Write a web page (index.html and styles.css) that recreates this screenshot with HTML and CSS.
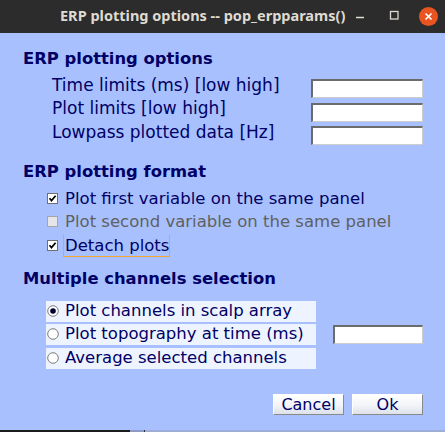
FILE: index.html
```html
<!DOCTYPE html>
<html>
<head>
<meta charset="utf-8">
<title>ERP plotting options</title>
<link rel="stylesheet" href="styles.css">
</head>
<body>
<div class="titlebar">
  <span class="title">ERP plotting options -- pop_erpparams()</span>
  <svg class="controls" width="100" height="33" viewBox="0 0 100 33">
    <line x1="11" y1="17.5" x2="19" y2="17.5" stroke="#dfdbd2" stroke-width="1.5"/>
    <rect x="45.5" y="11.5" width="7.5" height="7.5" fill="none" stroke="#dfdbd2" stroke-width="1.3"/>
    <circle cx="83.5" cy="16.5" r="9.5" fill="#e95420"/>
    <line x1="80.5" y1="13.5" x2="86.5" y2="19.5" stroke="#fff" stroke-width="1.6"/>
    <line x1="86.5" y1="13.5" x2="80.5" y2="19.5" stroke="#fff" stroke-width="1.6"/>
  </svg>
</div>
<div class="content">
  <h2 class="section s1">ERP plotting options</h2>
  <div class="fields">
    <label class="flabel">Time limits (ms) [low high]</label><input class="field" type="text">
    <label class="flabel">Plot limits [low high]</label><input class="field" type="text">
    <label class="flabel">Lowpass plotted data [Hz]</label><input class="field" type="text">
  </div>
  <h2 class="section s2">ERP plotting format</h2>
  <div class="checks">
    <div class="check">
      <span class="box"><svg width="9" height="9" viewBox="0 0 9 9"><polyline points="1.5,4.3 3.5,6.6 7.6,1.8" fill="none" stroke="#000" stroke-width="1.7"/></svg></span>
      <span class="ctext">Plot first variable on the same panel</span>
    </div>
    <div class="check disabled">
      <span class="box"></span>
      <span class="ctext">Plot second variable on the same panel</span>
    </div>
    <div class="check">
      <span class="box"><svg width="9" height="9" viewBox="0 0 9 9"><polyline points="1.5,4.3 3.5,6.6 7.6,1.8" fill="none" stroke="#000" stroke-width="1.7"/></svg></span>
      <span class="ctext focus">Detach plots</span>
    </div>
  </div>
  <h2 class="section s3">Multiple channels selection</h2>
  <div class="radios">
    <div class="radio">
      <svg width="12" height="12" viewBox="0 0 12 12"><circle cx="6" cy="6" r="5.3" fill="#fff" stroke="#7d7d7d" stroke-width="1"/><circle cx="6" cy="6" r="2.8" fill="#000033"/></svg>
      <span class="rtext">Plot channels in scalp array</span>
    </div>
    <div></div>
    <div class="radio">
      <svg width="12" height="12" viewBox="0 0 12 12"><circle cx="6" cy="6" r="5.3" fill="#fff" stroke="#7d7d7d" stroke-width="1"/></svg>
      <span class="rtext">Plot topography at time (ms)</span>
    </div>
    <input class="field small" type="text">
    <div class="radio">
      <svg width="12" height="12" viewBox="0 0 12 12"><circle cx="6" cy="6" r="5.3" fill="#fff" stroke="#7d7d7d" stroke-width="1"/></svg>
      <span class="rtext">Average selected channels</span>
    </div>
    <div></div>
  </div>
  <div class="buttons">
    <button class="btn" type="button">Cancel</button>
    <button class="btn" type="button">Ok</button>
  </div>
</div>
<div class="taskstrip"><span class="seg-dark"></span><span class="seg-mid"></span><span class="seg-rest"></span></div>
</body>
</html>
```
FILE: styles.css
```css
html, body {
  margin: 0;
  padding: 0;
}
body {
  width: 445px;
  height: 432px;
  overflow: hidden;
  background: #a8c1fe;
  color: #000066;
  font-family: "DejaVu Sans", "Liberation Sans", sans-serif;
}
.titlebar {
  height: 33px;
  background: #2c2c2c;
  display: flex;
}
.title {
  flex: 1;
  padding-left: 60px;
  font-family: "Noto Sans", "DejaVu Sans", sans-serif;
  font-weight: 700;
  font-size: 14.5px;
  line-height: 31px;
  color: #dfdbd2;
  white-space: nowrap;
}
.controls {
  flex: none;
  display: block;
}
.content {
  padding-left: 23px;
}
.section {
  margin: 16px 0 0;
  font-size: 16.4px;
  font-weight: 700;
  line-height: 20px;
}
.s2 { margin-top: 18px; }
.s3 { margin-top: 12px; }
.fields {
  display: grid;
  grid-template-columns: 259px 112px;
  grid-auto-rows: 23.5px;
  margin: 4.5px 0 0 29px;
  font-size: 17px;
  line-height: 23.5px;
}
.flabel {
  white-space: nowrap;
}
.field {
  box-sizing: border-box;
  height: 19px;
  margin: 5.5px 0 0;
  padding: 0;
  background: #fff;
  border: 1px solid;
  border-color: #6b6b6b #cdcdcd #cdcdcd #6b6b6b;
  border-width: 2px 1px 1px 2px;
  outline: none;
  width: 112px;
}
.checks {
  margin: 5px 0 0 24px;
  font-size: 16.5px;
}
.check {
  display: flex;
  align-items: center;
  height: 23.3px;
}
.box {
  flex: none;
  box-sizing: border-box;
  width: 11px;
  height: 11px;
  border: 1px solid #6f6f6f;
  background: #fff;
  display: flex;
  align-items: center;
  justify-content: center;
}
.box svg { display: block; }
.ctext {
  margin-left: 5px;
  padding-left: 1px;
  line-height: 21.3px;
  border: 1px solid transparent;
  white-space: nowrap;
}
.disabled { color: #606060; }
.disabled .box {
  background: #e6e6ea;
  border-color: #a6a6a6;
}
.focus {
  border-color: transparent #f2a531 #f2a531 #f2a531;
}
.radios {
  display: grid;
  grid-template-columns: 270px 90px;
  grid-auto-rows: 21px;
  column-gap: 17px;
  row-gap: 2.5px;
  margin: 12px 0 0 23px;
  font-size: 16.5px;
}
.radio {
  box-sizing: border-box;
  display: flex;
  align-items: center;
  height: 21px;
  padding: 0 0 1px 1px;
  background: #eef4ff;
  line-height: 20px;
  white-space: nowrap;
}
.radio svg { display: block; flex: none; }
.rtext { margin-left: 6px; }
.field.small {
  width: 90px;
  margin-top: 1px;
}
.buttons {
  display: flex;
  justify-content: flex-end;
  gap: 8px;
  padding-right: 22px;
  margin-top: 25.6px;
}
.btn {
  box-sizing: border-box;
  width: 71px;
  height: 21px;
  margin: 0;
  padding: 0;
  font-family: "DejaVu Sans", sans-serif;
  font-size: 16px;
  line-height: 19px;
  color: #000066;
  background: linear-gradient(#ffffff, #f2f4f8 55%, #dde1ea);
  border: 1px solid;
  border-color: #ffffff #8a8a8a #8a8a8a #ffffff;
}
.taskstrip {
  display: flex;
  height: 2px;
  margin-top: 15px;
}
.seg-dark { width: 130px; background: #1c1c1c; }
.seg-mid { width: 14px; background: #8d9bc4; border-right: 1px solid #2a2a40; }
.seg-rest { flex: 1; background: #9eaed6; }
```
